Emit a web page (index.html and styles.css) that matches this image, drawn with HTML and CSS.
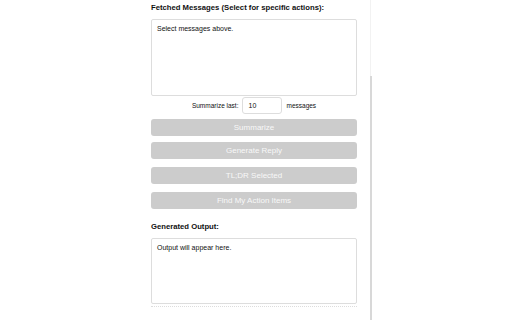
FILE: index.html
```html
<!DOCTYPE html>
<html>
<head>
<meta charset="utf-8">
<link rel="stylesheet" href="styles.css">
</head>
<body>
<div class="page">
  <div class="panel">
    <div class="label">Fetched Messages (Select for specific actions):</div>
    <div class="box box-msgs">Select messages above.</div>
    <div class="count-row">
      <span>Summarize last:</span>
      <span class="num">10</span>
      <span>messages</span>
    </div>
    <div class="btn btn-first">Summarize</div>
    <div class="btn">Generate Reply</div>
    <div class="btn btn-gap">TL;DR Selected</div>
    <div class="btn btn-gap">Find My Action Items</div>
    <div class="label label-out">Generated Output:</div>
    <div class="box box-out">Output will appear here.</div>
    <div class="dots"></div>
  </div>
  <div class="scroll"><div class="thumb"></div></div>
</div>
</body>
</html>
```
FILE: styles.css
```css
html, body {
  margin: 0;
  padding: 0;
  background: #fff;
  width: 512px;
  height: 320px;
  overflow: hidden;
  font-family: "Liberation Sans", Arial, sans-serif;
  color: #111;
}
.page {
  display: flex;
  height: 320px;
  padding-left: 151px;
}
.panel {
  width: 206px;
  display: flex;
  flex-direction: column;
}
.label {
  font-size: 7.7px;
  font-weight: bold;
  color: #111;
  margin-top: 3px;
  line-height: 10px;
}
.box {
  border: 1px solid #ddd;
  border-radius: 2px;
  font-size: 7px;
  padding: 5px 5px;
  color: #111;
  box-sizing: border-box;
}
.box-msgs {
  margin-top: 6px;
  height: 77px;
}
.count-row {
  display: flex;
  justify-content: center;
  align-items: center;
  gap: 4px;
  font-size: 6.5px;
  margin-top: 1px;
  height: 17px;
  color: #111;
}
.num {
  width: 40px;
  height: 17px;
  box-sizing: border-box;
  border: 1px solid #ddd;
  border-radius: 3px;
  padding-left: 5px;
  font-size: 7px;
  line-height: 15px;
}
.btn {
  background: #ccc;
  color: #f8f8f8;
  border-radius: 3px;
  height: 17px;
  line-height: 17px;
  text-align: center;
  font-size: 8px;
  margin-top: 6px;
}
.btn-first {
  margin-top: 5px;
}
.btn-gap {
  margin-top: 8px;
}
.label-out {
  margin-top: 13px;
}
.box-out {
  margin-top: 6px;
  height: 66px;
}
.dots {
  margin-top: 2px;
  border-top: 1px dotted #ddd;
}
.scroll {
  margin-left: 13px;
  width: 1px;
  background: #f2f2f2;
  position: relative;
}
.thumb {
  position: absolute;
  left: 0;
  top: 76px;
  bottom: 0;
  width: 2px;
  background: #d8d8d8;
}
```
